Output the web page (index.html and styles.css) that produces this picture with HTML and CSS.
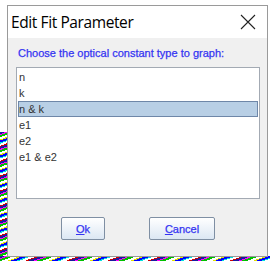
FILE: index.html
```html
<!DOCTYPE html>
<html lang="en">
<head>
    <meta charset="UTF-8">
    <title>Edit Fit Parameter</title>
    <link rel="stylesheet" href="styles.css">
</head>
<body>
    <div class="desktop">
        <div class="noise noise-left"></div>
        <div class="noise noise-bottom"></div>

        <div class="dialog">
            <div class="titlebar">
                <span class="title">Edit Fit Parameter</span>
                <svg class="close" width="16" height="16" viewBox="0 0 16 16">
                    <path d="M1 1 L15 15 M15 1 L1 15" stroke="#222" stroke-width="1.1" fill="none"/>
                </svg>
            </div>
            <div class="content">
                <p class="prompt">Choose the optical constant type to graph:</p>
                <ul class="list">
                    <li>n</li>
                    <li>k</li>
                    <li class="selected">n &amp; k</li>
                    <li>e1</li>
                    <li>e2</li>
                    <li>e1 &amp; e2</li>
                </ul>
                <div class="buttons">
                    <button class="btn btn-ok"><u>O</u>k</button>
                    <button class="btn btn-cancel"><u>C</u>ancel</button>
                </div>
            </div>
        </div>
    </div>
</body>
</html>
```
FILE: styles.css
```css
body { margin: 0; background: #fff; font-family: "Liberation Sans", Arial, sans-serif; }
.desktop { position: relative; width: 270px; height: 261px; overflow: hidden; background: #fff; }

.noise { position: absolute; background: repeating-linear-gradient(160deg, #1a1aa0 0 2px, #ff00ff 2px 3px, #00c000 3px 5px, #ffffff 5px 7px, #e0e000 7px 8px, #0000ff 8px 10px, #00e0e0 10px 11px, #ffffff 11px 13px, #d00000 13px 14px); }
.noise-left { left: 0; top: 132px; width: 8px; height: 129px; }
.noise-bottom { left: 0; top: 256px; width: 270px; height: 5px; }

.dialog { position: absolute; left: 7px; top: 5px; width: 259px; height: 250px; border: 1px solid #9a9a9a; background: #f0f0f0; display: flex; flex-direction: column; }

.titlebar { height: 32px; background: #fff; display: flex; align-items: center; justify-content: space-between; padding: 0 11px 0 3px; }
.title { font-family: "Open Sans", sans-serif; font-size: 15.5px; color: #000; letter-spacing: -0.4px; }
.close { display: block; }

.content { flex: 1; padding: 9px 7px 0 8px; display: flex; flex-direction: column; }
.prompt { margin: 0 0 8px 2px; font-size: 11px; color: #3434f2; -webkit-text-stroke: 0.25px #3434f2; }

.list { list-style: none; margin: 0; padding: 1px; height: 128px; border: 1px solid #a3aab3; background: #fff; }
.list li { height: 16px; line-height: 16px; padding-left: 1px; font-size: 11px; color: #333; box-sizing: border-box; }
.list li.selected { background: #b8cfe5; border: 1px solid #6e87a8; line-height: 14px; padding-left: 0; }

.buttons { display: flex; justify-content: center; gap: 44px; margin-top: 18px; }
.btn { height: 23px; padding: 0; border: 1px solid #7f8fa3; border-radius: 2px; background: linear-gradient(#ffffff, #dce7f3); font-family: "Liberation Sans", Arial, sans-serif; font-size: 11px; color: #3434f2; -webkit-text-stroke: 0.25px #3434f2; }
.btn-ok { width: 44px; }
.btn-cancel { width: 66px; }
```
